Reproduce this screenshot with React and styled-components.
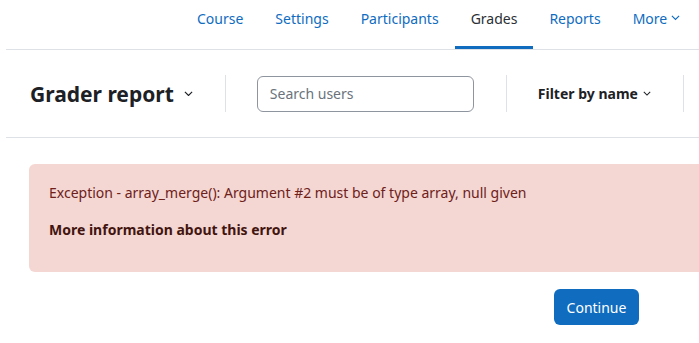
import React from "react";
import styled, { createGlobalStyle } from "styled-components";

const Global = createGlobalStyle`
  html, body { margin: 0; padding: 0; background: #fff; overflow: hidden; }
  body { font-family: "Noto Sans", "Open Sans", sans-serif; color: #1d2125; font-size: 14px; }
  * { box-sizing: border-box; }
`;

const Page = styled.div`
  margin-left: 6px;
  width: 1158px;
`;

const TabBar = styled.nav`
  display: flex;
  padding-left: 175px;
  height: 50px;
  border-bottom: 1px solid #dee2e6;
`;

const Tab = styled.a`
  display: flex;
  align-items: center;
  gap: 4px;
  height: 49px;
  padding: 0 16px 10px;
  font-size: 14px;
  color: ${(p) => (p.$active ? "#2b3035" : "#0f6cbf")};
  border-bottom: 3px solid ${(p) => (p.$active ? "#0f6cbf" : "transparent")};
  text-decoration: none;
  white-space: nowrap;
`;

const Header = styled.div`
  display: flex;
  align-items: center;
  height: 88px;
  padding-left: 24px;
  border-bottom: 1px solid #dee2e6;
`;

const Section = styled.div`
  display: flex;
  align-items: center;
  gap: ${(p) => p.$gap || 6}px;
  height: 37px;
  padding: ${(p) => (p.$first ? "0 32px 0 0" : "0 32px 0 31px")};
  border-right: 1px solid #dee2e6;
`;

const Title = styled.h2`
  margin: 0;
  font-size: 21px;
  font-weight: 700;
  color: #1d2125;
  white-space: nowrap;
`;

const SearchBox = styled.input`
  width: 217px;
  height: 36px;
  border: 1px solid #8f959e;
  border-radius: 6px;
  padding: 0 12px;
  font-family: inherit;
  font-size: 14px;
  color: #1d2125;
  outline: none;
  &::placeholder { color: #6a737b; }
`;

const FilterLabel = styled.span`
  font-weight: 700;
  font-size: 14px;
  white-space: nowrap;
`;

const Main = styled.div`
  padding: 26px 0 0 23px;
`;

const Alert = styled.div`
  background: #f4d6d2;
  color: #6e211a;
  border-radius: 6px;
  padding: 18px 20px 16px;
`;

const AlertText = styled.p`
  margin: 0;
  line-height: 22px;
  font-size: 14px;
`;

const AlertLink = styled.p`
  margin: 15px 0 15px;
  line-height: 22px;
  font-weight: 700;
  color: #42140f;
`;

const ButtonRow = styled.div`
  display: flex;
  justify-content: center;
  padding-top: 17px;
`;

const Button = styled.button`
  background: #0f6cbf;
  color: #fff;
  border: none;
  border-radius: 6px;
  height: 36px;
  padding: 0 13px;
  font-family: inherit;
  font-size: 14px;
`;

const Chevron = ({ size = 9, color = "currentColor" }) => (
  <svg width={size} height={size * 0.6} viewBox="0 0 10 6" fill="none">
    <path d="M1 1l4 4 4-4" stroke={color} strokeWidth="1.3" />
  </svg>
);

export default function App() {
  return (
    <>
      <Global />
      <Page>
        <TabBar>
          <Tab>Course</Tab>
          <Tab>Settings</Tab>
          <Tab>Participants</Tab>
          <Tab $active>Grades</Tab>
          <Tab>Reports</Tab>
          <Tab>
            More <Chevron size={9} />
          </Tab>
        </TabBar>
        <Header>
          <Section $first $gap={10}>
            <Title>Grader report</Title>
            <Chevron size={9} color="#1d2125" />
          </Section>
          <Section>
            <SearchBox placeholder="Search users" />
          </Section>
          <Section $gap={5}>
            <FilterLabel>Filter by name</FilterLabel>
            <Chevron size={8} color="#1d2125" />
          </Section>
        </Header>
        <Main>
          <Alert>
            <AlertText>
              Exception - array_merge(): Argument #2 must be of type array, null given
            </AlertText>
            <AlertLink>More information about this error</AlertLink>
          </Alert>
          <ButtonRow>
            <Button>Continue</Button>
          </ButtonRow>
        </Main>
      </Page>
    </>
  );
}
